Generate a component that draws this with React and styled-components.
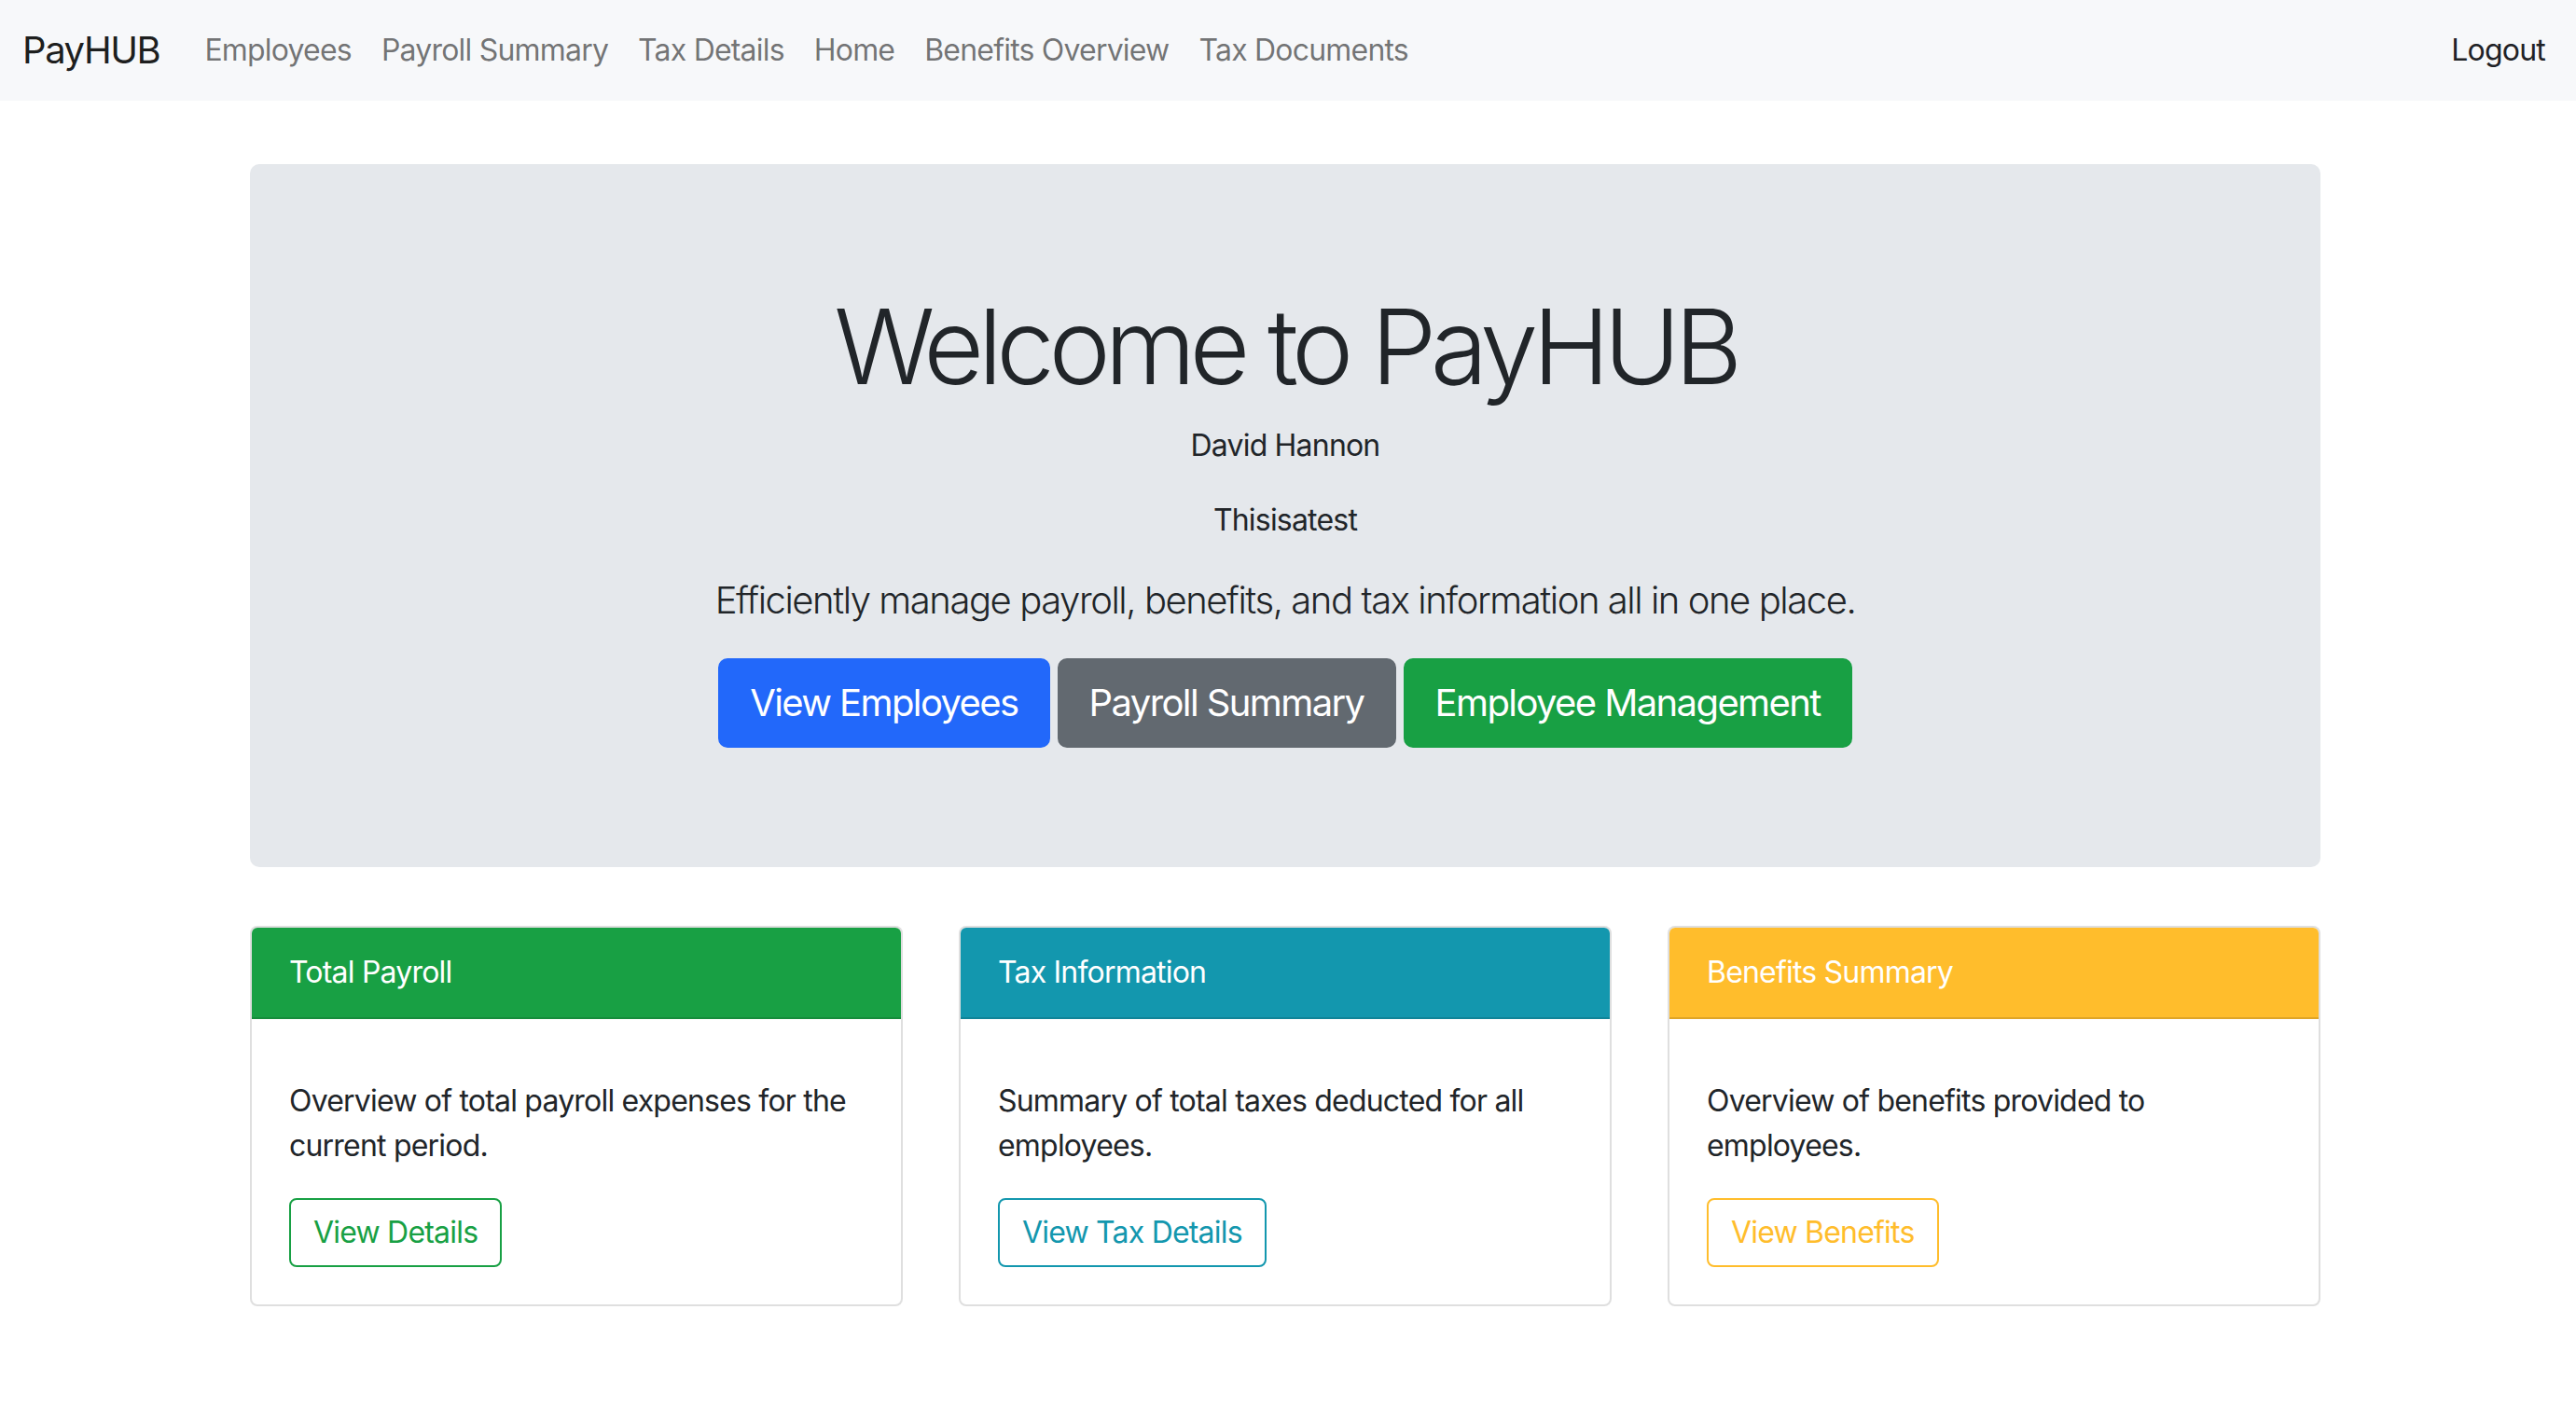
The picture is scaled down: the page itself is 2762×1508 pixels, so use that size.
import React from "react";
import styled, { createGlobalStyle } from "styled-components";

const GlobalStyle = createGlobalStyle`
  * { box-sizing: border-box; }
  body {
    margin: 0;
    background: #ffffff;
    color: #212529;
    font-family: Inter, "Noto Sans", "Liberation Sans", sans-serif;
    font-size: 32px;
    line-height: 1.5;
    letter-spacing: -0.025em;
  }
`;

const colors = {
  primary: "#2268fa",
  secondary: "#626970",
  success: "#18a044",
  info: "#1397ae",
  warning: "#ffbd2c",
};

const Navbar = styled.nav`
  height: 108px;
  background: #f7f8fa;
  display: flex;
  align-items: center;
  padding: 0 33px 0 24px;
`;

const Brand = styled.a`
  font-size: 40px;
  letter-spacing: -0.035em;
  color: rgba(0, 0, 0, 0.9);
  text-decoration: none;
  margin-right: 32px;
  line-height: 60px;
`;

const NavList = styled.div`
  display: flex;
  align-items: center;
`;

const NavLink = styled.a`
  padding: 0 16px;
  color: rgba(0, 0, 0, 0.55);
  text-decoration: none;
  font-size: 32px;
`;

const Logout = styled.a`
  margin-left: auto;
  color: #1f2226;
  text-decoration: none;
  font-size: 32px;
`;

const Container = styled.main`
  max-width: 2220px;
  margin: 68px calc(50% - 1107px) 0 calc(50% - 1113px);
`;

const Jumbotron = styled.section`
  background: #e5e8ec;
  border-radius: 10px;
  padding: 128px 64px;
  text-align: center;
  margin-bottom: 63px;
`;

const Title = styled.h1`
  font-size: 112px;
  font-weight: 300;
  line-height: 1.2;
  letter-spacing: -0.058em;
  margin: 0 0 16px;
  color: #212529;
`;

const Para = styled.p`
  margin: 0 0 32px;
`;

const Lead = styled.p`
  margin: 0 0 32px;
  font-size: 40px;
  font-weight: 300;
  letter-spacing: -0.036em;
`;

const ButtonRow = styled.div`
  display: flex;
  justify-content: center;
  gap: 8px;
`;

const HeroButton = styled.a`
  background: ${(p) => colors[p.$variant]};
  border: 2px solid ${(p) => colors[p.$variant]};
  color: #ffffff;
  font-size: 40px;
  line-height: 60px;
  letter-spacing: -0.04em;
  padding: 16px 32px;
  border-radius: 10px;
  text-decoration: none;
`;

const CardRow = styled.div`
  display: grid;
  grid-template-columns: repeat(3, 1fr);
  gap: 60px;
  margin-bottom: 64px;
`;

const Card = styled.div`
  border: 2px solid rgba(0, 0, 0, 0.125);
  border-radius: 8px;
  overflow: hidden;
  background: #ffffff;
`;

const CardHeader = styled.div`
  background: ${(p) => colors[p.$variant]};
  color: #ffffff;
  padding: 24px 40px;
  line-height: 48px;
  border-bottom: 2px solid rgba(0, 0, 0, 0.125);
`;

const CardBody = styled.div`
  padding: 64px 40px 40px;
`;

const CardText = styled.p`
  margin: 0 0 32px;
`;

const OutlineButton = styled.a`
  display: inline-block;
  border: 2px solid ${(p) => colors[p.$variant]};
  color: ${(p) => colors[p.$variant]};
  padding: 11px 24px;
  line-height: 48px;
  border-radius: 8px;
  text-decoration: none;
`;

const cards = [
  {
    variant: "success",
    title: "Total Payroll",
    text: "Overview of total payroll expenses for the current period.",
    action: "View Details",
  },
  {
    variant: "info",
    title: "Tax Information",
    text: "Summary of total taxes deducted for all employees.",
    action: "View Tax Details",
  },
  {
    variant: "warning",
    title: "Benefits Summary",
    text: "Overview of benefits provided to employees.",
    action: "View Benefits",
  },
];

export default function App() {
  return (
    <>
      <GlobalStyle />
      <Navbar>
        <Brand href="#">PayHUB</Brand>
        <NavList>
          {["Employees", "Payroll Summary", "Tax Details", "Home", "Benefits Overview", "Tax Documents"].map((l) => (
            <NavLink key={l} href="#">{l}</NavLink>
          ))}
        </NavList>
        <Logout href="#">Logout</Logout>
      </Navbar>
      <Container>
        <Jumbotron>
          <Title>Welcome to PayHUB</Title>
          <Para>David Hannon</Para>
          <Para>Thisisatest</Para>
          <Lead>Efficiently manage payroll, benefits, and tax information all in one place.</Lead>
          <ButtonRow>
            <HeroButton $variant="primary" href="#">View Employees</HeroButton>
            <HeroButton $variant="secondary" href="#">Payroll Summary</HeroButton>
            <HeroButton $variant="success" href="#">Employee Management</HeroButton>
          </ButtonRow>
        </Jumbotron>
        <CardRow>
          {cards.map((c) => (
            <Card key={c.title}>
              <CardHeader $variant={c.variant}>{c.title}</CardHeader>
              <CardBody>
                <CardText>{c.text}</CardText>
                <OutlineButton $variant={c.variant} href="#">{c.action}</OutlineButton>
              </CardBody>
            </Card>
          ))}
        </CardRow>
      </Container>
    </>
  );
}
